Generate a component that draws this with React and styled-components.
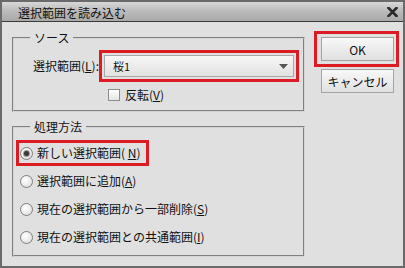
import React from "react";
import styled, { createGlobalStyle, css } from "styled-components";

const Global = createGlobalStyle`
  html, body { margin: 0; padding: 0; background: #e0e0e0; }
  body { font-family: "Noto Sans CJK JP", "Noto Sans", sans-serif; font-size: 12px; color: #111; }
  * { box-sizing: border-box; }
`;

const Window = styled.div`
  width: 405px;
  height: 268px;
  border: 2px solid #6a6a6a;
  background: #e0e0e0;
  display: flex;
  flex-direction: column;
`;

const TitleBar = styled.div`
  height: 20px;
  flex: none;
  display: flex;
  align-items: center;
  justify-content: space-between;
  padding: 3px 5px 0 16px;
  background: linear-gradient(#d8d8d8, #bcbcbc 45%, #a9a9a9);
  border-bottom: 1px solid #3a3a3a;
`;

const Title = styled.span`
  font-size: 12px;
  line-height: 14px;
  color: #111;
`;

const Close = styled.span`
  display: flex;
  width: 11px;
  height: 10px;
  margin-top: -2px;
`;

const Body = styled.div`
  flex: 1;
  display: flex;
  gap: 9px;
  padding: 9px 0 0 10px;
`;

const LeftColumn = styled.div`
  width: 293px;
  display: flex;
  flex-direction: column;
  gap: 8px;
`;

const Group = styled.fieldset`
  margin: 0;
  padding: 0;
  min-width: 0;
  border: 2px groove #d4d4d4;
`;

const Legend = styled.legend`
  margin-left: 16px;
  padding: 0 4px;
  font-size: 12px;
  line-height: 14px;
`;

const GroupContent = styled.div`
  display: flex;
  flex-direction: column;
  ${(p) => p.$pad && css`padding: ${p.$pad};`}
`;

const FieldRow = styled.div`
  display: flex;
  align-items: center;
`;

const Label = styled.span`
  width: 66px;
  line-height: 14px;
  white-space: nowrap;
`;

const Highlight = styled.div`
  display: flex;
  border: 3px solid ${(p) => (p.$on ? "#dc1c22" : "transparent")};
  padding: ${(p) => p.$pad || "2px"};
`;

const Select = styled.div`
  width: 190px;
  height: 22px;
  display: flex;
  align-items: center;
  justify-content: space-between;
  padding: 0 5px 0 8px;
  border: 1px solid #a8a8a8;
  background: linear-gradient(#f7f7f7, #ececec 50%, #e2e2e2);
  font-size: 11px;
`;

const CheckRow = styled.label`
  display: flex;
  align-items: center;
  gap: 5px;
  margin: 6px 0 0 75px;
  height: 14px;
  line-height: 14px;
`;

const CheckBox = styled.span`
  width: 12px;
  height: 12px;
  border: 1px solid #8c8c8c;
  background: linear-gradient(#ffffff, #e6e6e6);
`;

const RadioList = styled.div`
  display: flex;
  flex-direction: column;
  align-items: flex-start;
  gap: 2px;
`;

const RadioItem = styled.label`
  height: 26px;
  display: flex;
  align-items: center;
  gap: 4px;
  padding: 0 5px 0 1px;
  border: 3px solid ${(p) => (p.$highlight ? "#dc1c22" : "transparent")};
  line-height: 14px;
  white-space: nowrap;
`;

const Radio = styled.span`
  width: 13px;
  height: 13px;
  border-radius: 50%;
  border: 1px solid #7e7e7e;
  background: radial-gradient(circle at 40% 35%, #ffffff, #e4e4e4 70%, #d6d6d6);
  display: flex;
  align-items: center;
  justify-content: center;
  &::after {
    content: "";
    width: 5px;
    height: 5px;
    border-radius: 50%;
    background: ${(p) => (p.$checked ? "#3a3a3a" : "transparent")};
    box-shadow: ${(p) => (p.$checked ? "0 0 0 1px #9a9a9a" : "none")};
  }
`;

const ButtonColumn = styled.div`
  display: flex;
  flex-direction: column;
  align-items: flex-start;
  gap: 2px;
`;

const Button = styled.button`
  width: 73px;
  height: 24px;
  margin: 0;
  margin-left: ${(p) => (p.$indent ? "7px" : "0")};
  padding: 0;
  border: 1px solid #a4a4a4;
  background: linear-gradient(#f8f8f8, #ececec 50%, #e0e0e0);
  font-family: "Noto Sans CJK JP", "Noto Sans", sans-serif;
  font-size: 12px;
  color: #111;
  display: flex;
  align-items: center;
  justify-content: center;
`;

const options = [
  { text: "新しい選択範囲( ", key: "N", checked: true },
  { text: "選択範囲に追加(", key: "A" },
  { text: "現在の選択範囲から一部削除(", key: "S" },
  { text: "現在の選択範囲との共通範囲(", key: "I" },
];

export default function App() {
  return (
    <>
      <Global />
      <Window>
        <TitleBar>
          <Title>選択範囲を読み込む</Title>
          <Close>
            <svg width="11" height="10" viewBox="0 0 11 10">
              <path d="M1.5 1 L9.5 9 M9.5 1 L1.5 9" stroke="#2a2a2a" strokeWidth="2.6" strokeLinecap="square" />
            </svg>
          </Close>
        </TitleBar>
        <Body>
          <LeftColumn>
            <Group>
              <Legend>ソース</Legend>
              <GroupContent $pad="5px 3px 8px 19px">
                <FieldRow>
                  <Label>
                    選択範囲(<u>L</u>):
                  </Label>
                  <Highlight $on>
                    <Select>
                      <span>桜1</span>
                      <svg width="9" height="5" viewBox="0 0 9 5">
                        <path d="M0 0 H9 L4.5 5 Z" fill="#555" />
                      </svg>
                    </Select>
                  </Highlight>
                </FieldRow>
                <CheckRow>
                  <CheckBox />
                  <span>
                    反転(<u>V</u>)
                  </span>
                </CheckRow>
              </GroupContent>
            </Group>
            <Group>
              <Legend>処理方法</Legend>
              <GroupContent $pad="6px 0 5px 2px">
                <RadioList>
                  {options.map((o) => (
                    <RadioItem key={o.key} $highlight={o.checked}>
                      <Radio $checked={o.checked} />
                      <span>
                        {o.text}
                        <u>{o.key}</u>)
                      </span>
                    </RadioItem>
                  ))}
                </RadioList>
              </GroupContent>
            </Group>
          </LeftColumn>
          <ButtonColumn>
            <Highlight $on $pad="3px 2px 3px 4px">
              <Button>OK</Button>
            </Highlight>
            <Button $indent>キャンセル</Button>
          </ButtonColumn>
        </Body>
      </Window>
    </>
  );
}
